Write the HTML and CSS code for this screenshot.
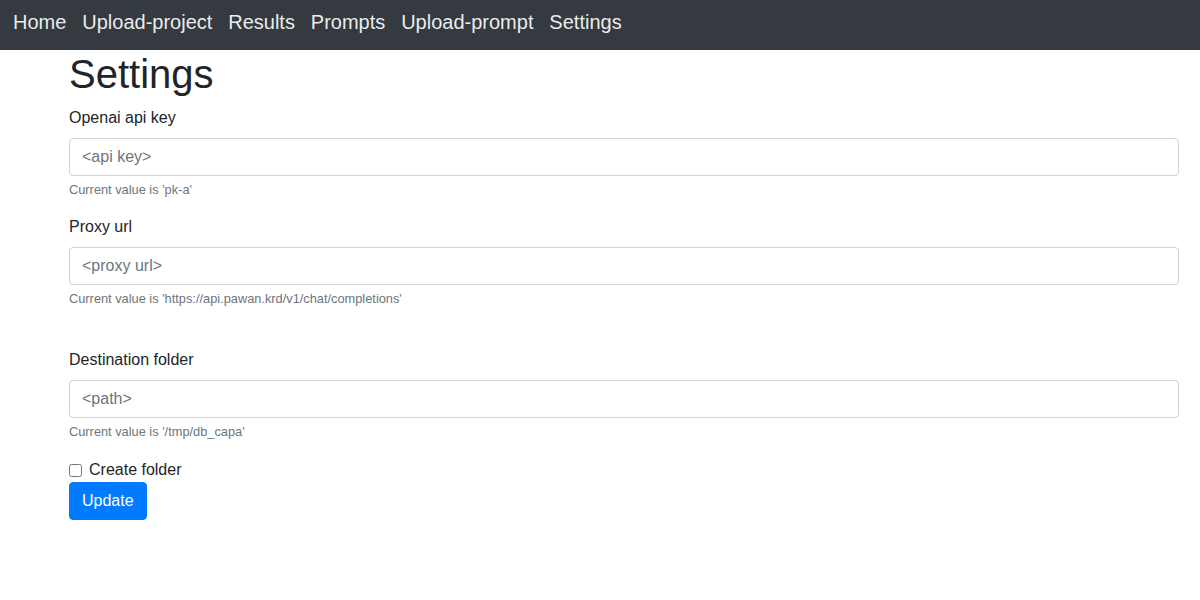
FILE: index.html
```html
<!DOCTYPE html>
<html lang="en">
<head>
<meta charset="utf-8">
<title>Settings</title>
<link rel="stylesheet" href="styles.css">
</head>
<body>
<nav class="navbar">
  <a class="nav-link" href="#">Home</a>
  <a class="nav-link" href="#">Upload-project</a>
  <a class="nav-link" href="#">Results</a>
  <a class="nav-link" href="#">Prompts</a>
  <a class="nav-link" href="#">Upload-prompt</a>
  <a class="nav-link" href="#">Settings</a>
</nav>
<main class="container">
  <h1 class="title">Settings</h1>
  <form class="form">
    <div class="form-group">
      <label class="label" for="key">Openai api key</label>
      <input class="form-control" id="key" type="text" placeholder="&lt;api key&gt;">
      <small class="help">Current value is 'pk-a'</small>
    </div>
    <div class="form-group">
      <label class="label" for="proxy">Proxy url</label>
      <input class="form-control" id="proxy" type="text" placeholder="&lt;proxy url&gt;">
      <small class="help">Current value is 'https://api.pawan.krd/v1/chat/completions'</small>
    </div>
    <div class="spacer"></div>
    <div class="form-group">
      <label class="label" for="dest">Destination folder</label>
      <input class="form-control" id="dest" type="text" placeholder="&lt;path&gt;">
      <small class="help">Current value is '/tmp/db_capa'</small>
    </div>
    <div class="check-row">
      <input class="check" id="create" type="checkbox">
      <label class="check-label" for="create">Create folder</label>
    </div>
    <button class="btn" type="button">Update</button>
  </form>
</main>
</body>
</html>
```
FILE: styles.css
```css
* { box-sizing: border-box; }
html, body { margin: 0; padding: 0; }
body {
  font-family: "Liberation Sans", Arial, sans-serif;
  font-size: 16px;
  line-height: 1.5;
  color: #212529;
  background: #fff;
}
.navbar {
  height: 50px;
  background: #343a40;
  display: flex;
  align-items: flex-start;
  padding: 7px 0 0 13px;
  gap: 15.9px;
}
.nav-link {
  color: rgba(255, 255, 255, 0.92);
  text-decoration: none;
  font-size: 20px;
  line-height: 30px;
}
.container {
  margin-left: 69px;
  width: 1110px;
}
.title {
  margin: 0 0 8px;
  font-size: 40px;
  font-weight: 500;
  line-height: 1.2;
}
.form-group {
  margin-bottom: 16px;
}
.label {
  display: block;
  margin-bottom: 8px;
}
.form-control {
  display: block;
  width: 100%;
  height: 38px;
  padding: 6px 12px;
  font: inherit;
  font-size: 16px;
  color: #495057;
  border: 1px solid #ced4da;
  border-radius: 4px;
  background: #fff;
}
.form-control::placeholder { color: #6c757d; opacity: 1; }
.help {
  display: block;
  margin-top: 4px;
  font-size: 12.8px;
  line-height: 1.5;
  color: #6c757d;
}
.spacer { height: 24px; }
.check-row {
  display: flex;
  align-items: center;
  height: 24px;
}
.check {
  width: 13px;
  height: 13px;
  margin: 1px 7px 0 0;
}
.btn {
  display: block;
  height: 38px;
  padding: 6px 12px;
  font: inherit;
  font-size: 16px;
  color: #fff;
  background: #007bff;
  border: 1px solid #007bff;
  border-radius: 4px;
}
```
